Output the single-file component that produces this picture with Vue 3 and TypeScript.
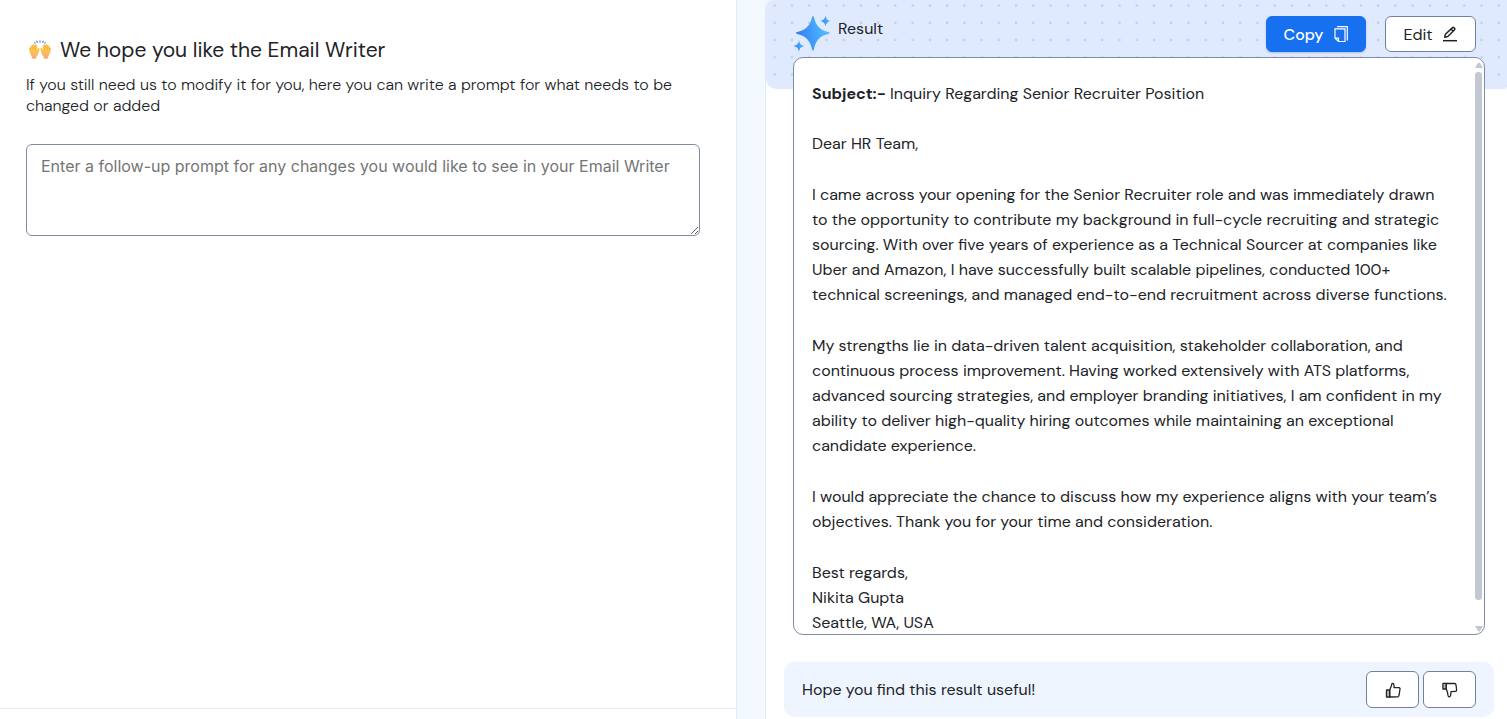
<script setup lang="ts">
import { ref } from 'vue'

const prompt = ref('')
const subject = 'Inquiry Regarding Senior Recruiter Position'
const paragraphs: string[][] = [
  ['Dear HR Team,'],
  [
    'I came across your opening for the Senior Recruiter role and was immediately drawn',
    'to the opportunity to contribute my background in full-cycle recruiting and strategic',
    'sourcing. With over five years of experience as a Technical Sourcer at companies like',
    'Uber and Amazon, I have successfully built scalable pipelines, conducted 100+',
    'technical screenings, and managed end-to-end recruitment across diverse functions.',
  ],
  [
    'My strengths lie in data-driven talent acquisition, stakeholder collaboration, and',
    'continuous process improvement. Having worked extensively with ATS platforms,',
    'advanced sourcing strategies, and employer branding initiatives, I am confident in my',
    'ability to deliver high-quality hiring outcomes while maintaining an exceptional',
    'candidate experience.',
  ],
  [
    'I would appreciate the chance to discuss how my experience aligns with your team’s',
    'objectives. Thank you for your time and consideration.',
  ],
  ['Best regards,', 'Nikita Gupta', 'Seattle, WA, USA'],
]
</script>

<template>
  <div class="page">
    <section class="prompt-panel">
      <div class="prompt-body">
        <h1>
          <svg class="hands" viewBox="0 0 24 20" aria-hidden="true">
            <defs>
              <linearGradient id="skin" x1="0" x2="0" y1="0" y2="1">
                <stop offset="0.400" stop-color="#fdc54c" />
                <stop offset="1" stop-color="#f7a685" />
              </linearGradient>
            </defs>
            <g fill="none" stroke="#4a90ea" stroke-width="1.300" stroke-linecap="round">
              <path d="M12 .9v1.200M8.800 1.200l.5 1M15.200 1.200l-.5 1M6.700 2.800l.4.300M17.300 2.800l-.4.300" />
            </g>
            <g id="hand">
              <path fill="url(#skin)" d="M4 18.300C4 16 2.300 14.500 1.700 12L1 8.500c-.1-1.100 1.100-1.300 1.400-.4L2.400 6.200c.1-1.100 1.400-1.200 1.600-.2L4.300 4.800c.3-.9 1.500-.8 1.700.1C6.500 3.900 7.800 4.200 7.700 5.300 8.400 4.700 9.400 5.200 9.200 6.200L8.900 10C9.500 8.400 10.600 7.700 11.300 8.300 11.800 8.800 11.500 9.600 11.300 10.600 10.800 13.200 9.900 15.100 8.500 16.400L8.400 18.300Q6.300 19.300 4 18.300z" />
              <path fill="none" stroke="#eb9c3a" stroke-width=".4" d="M2.500 8.200l.6 2.400M4.100 6.200l.5 3.900M6 5.100l.2 4.700M7.700 5.500l-.2 4.400" />
            </g>
            <use href="#hand" transform="matrix(-1 0 0 1 24 0)" />
          </svg>
          <span>We hope you like the Email Writer</span>
        </h1>
        <label class="intro" for="follow-up">If you still need us to modify it for you, here you can write a prompt for what needs to be<br />changed or added</label>
        <textarea id="follow-up" v-model="prompt" placeholder="Enter a follow-up prompt for any changes you would like to see in your Email Writer"></textarea>
      </div>
    </section>

    <section class="result-panel">
      <svg class="backdrop" aria-hidden="true">
        <defs>
          <pattern id="dots" width="17.240" height="17.240" patternUnits="userSpaceOnUse">
            <circle cx="8.700" cy="5.500" r="1.300" fill="#c6cbd5" />
          </pattern>
        </defs>
        <rect width="100%" height="100%" fill="url(#dots)" />
      </svg>
      <header class="result-header">
        <svg class="sparkle" viewBox="0 0 38 38" aria-hidden="true">
          <defs>
            <linearGradient id="shine" x1="0" x2="1" y1="0.200" y2="0">
              <stop offset="0" stop-color="#3480f8" />
              <stop offset="1" stop-color="#55c8ff" />
            </linearGradient>
          </defs>
          <g fill="url(#shine)">
            <path d="M19.300 1.500Q20 .5 20.700 1.500C23 11 26.500 15 36 17.300Q37.500 18 36 18.700C26.500 21 23 25 20.700 35Q20 36 19.300 35C17 25 13 21 3.500 18.700Q2 18 3.500 17.300C13 15 17 11 19.300 1.500z" />
            <path d="M32.500 .5C33.300 4.200 34.100 5 37.800 6 34.100 7 33.300 7.800 32.500 11.500 31.700 7.800 30.900 7 27.200 6 30.900 5 31.700 4.200 32.500 .5z" />
            <path d="M6 25C6.800 29.300 7.800 30.200 12 31 7.800 31.900 6.800 32.800 6 37 5.200 32.800 4.200 31.900 0 31 4.200 30.200 5.200 29.300 6 25z" />
          </g>
        </svg>
        <h2>Result</h2>
        <button type="button" class="copy">
          Copy
          <svg class="copy-icon" viewBox="0 0 14 17" fill="none" stroke="currentColor" stroke-width="1.200" aria-hidden="true">
            <path d="M3 .7h10.300v13.800M1 2.900h10v12.600H4.500L1 12.200zM1 12.200h3.500v3.300" />
          </svg>
        </button>
        <button type="button" class="edit">
          Edit
          <svg class="edit-icon" viewBox="0 0 16 16" fill="none" stroke="currentColor" stroke-width="1.500" stroke-linejoin="round" aria-hidden="true">
            <path d="M2.700 11.200l.7-3L10.500 1.600q.7-.6 1.300 0l.8.8q.6.7 0 1.300L5.800 10.500zM9 3l2.300 2.300" />
            <path d="M1 14.700h14" />
          </svg>
        </button>
      </header>

      <div class="result-box">
        <article class="email">
          <p class="subject"><strong>Subject:-</strong> {{ subject }}</p>
          <p v-for="(lines, i) in paragraphs" :key="i">
            <span v-for="line in lines" :key="line" class="line">{{ line }}</span>
          </p>
        </article>
        <div class="scrollbar" aria-hidden="true">
          <svg viewBox="0 0 8 6"><path d="M1 6Q0 6 .5 5L3 1Q4 0 5 1L7.500 5Q8 6 7 6z" /></svg>
          <div class="track"><div class="thumb"></div></div>
          <svg viewBox="0 0 8 6"><path d="M1 0Q0 0 .5 1L3 5Q4 6 5 5L7.500 1Q8 0 7 0z" /></svg>
        </div>
      </div>

      <footer class="feedback">
        <span>Hope you find this result useful!</span>
        <button type="button" aria-label="Useful">
          <svg viewBox="0 0 16 16" fill="none" stroke="currentColor" stroke-width="1.300" stroke-linejoin="round" aria-hidden="true">
            <path fill="#bbb" d="M1.500 8H4.700v7H1.500z" />
            <path d="M4.700 8L6.500 3.500 6.900 1.700Q7.600 1 8.500 1.600 9.300 2.500 9 5.500L14 5.700Q15.300 6 15 7.300L14.600 9.500 14.300 12 13.600 14.200Q13.300 14.900 12.500 14.900L4.700 15z" />
          </svg>
        </button>
        <button type="button" aria-label="Not useful">
          <svg viewBox="0 0 16 16" fill="none" stroke="currentColor" stroke-width="1.300" stroke-linejoin="round" aria-hidden="true">
            <path fill="#bbb" d="M.9 1.400H4.300V7H.9z" />
            <path d="M4.300 1.400L12.800 1.500Q13.700 1.600 13.900 2.500L14.300 5 14.600 8Q14.600 9.200 13.500 9.300L9 9.700 8.600 13.500Q8.200 15 7 14.800 6.200 14.600 6 13.500L5.500 10.500 4.300 7z" />
          </svg>
        </button>
      </footer>
    </section>
  </div>
</template>

<style>
body {
  margin: 0;
}
</style>

<style scoped>
.page {
  display: grid;
  grid-template-columns: minmax(0, 737fr) minmax(0, 742fr);
  grid-template-rows: minmax(0, 1fr);
  gap: 28px;
  height: 100vh;
  box-sizing: border-box;
  background: #f4f8ff;
  color: #212327;
  font-family: "DM Sans", Inter, "Liberation Sans", sans-serif;
  font-size: 16px;
}
.page * {
  box-sizing: border-box;
}
.prompt-panel {
  display: flex;
  padding-bottom: 10px;
  background: #fff;
  border-right: 1px solid #dfebff;
}
.prompt-body {
  flex: 1;
  min-width: 0;
  padding: 36px 36px 0 26px;
  border-bottom: 1px solid #dfebff;
}
h1 {
  display: flex;
  align-items: center;
  gap: 8px;
  margin: 0 0 10px 2px;
  font-size: 21px;
  font-weight: 400;
  line-height: 28px;
}
.hands {
  width: 24px;
  height: 20px;
}
.intro {
  display: block;
  margin-bottom: 28px;
  font-weight: 300;
  line-height: 21px;
  white-space: nowrap;
}
textarea {
  display: block;
  width: 100%;
  height: 92px;
  padding: 10px 14px;
  border: 1px solid #7f8ba8;
  border-radius: 6px;
  background: #fff;
  color: inherit;
  font: 400 16px/22px Inter, sans-serif;
  resize: both;
}
textarea::placeholder {
  color: #757575;
}
.result-panel {
  position: relative;
  display: flex;
  flex-direction: column;
  padding: 0 13px 2px 18px;
  background: #fff;
  border-left: 1px solid #dfebff;
  border-top-left-radius: 8px;
}
.backdrop {
  position: absolute;
  inset: 0 0 auto;
  width: 100%;
  height: 89px;
  background: #e0eaff;
  border-radius: 8px 0 3px 10px;
}
.result-header {
  position: relative;
  display: flex;
  align-items: flex-start;
  height: 57px;
  padding: 15px 18px 0 9px;
}
.sparkle {
  width: 38px;
  height: 38px;
}
h2 {
  flex: 1;
  margin: 4px 0 0 7px;
  font-size: 16px;
  font-weight: 400;
  line-height: 20px;
}
button {
  display: flex;
  align-items: center;
  justify-content: center;
  height: 36px;
  padding: 0;
  border: 1px solid #71809c;
  border-radius: 6px;
  background: #fff;
  color: #212327;
  font: inherit;
}
.copy {
  width: 100px;
  margin: 1px 19px 0 0;
  gap: 11px;
  border-color: #1770f0;
  background: #1770f0;
  color: #fff;
  font-weight: 500;
  box-shadow: 0 1px 2px rgb(30 60 120 / 25%);
}
.edit {
  width: 91px;
  margin-top: 1px;
  gap: 9px;
}
.copy-icon {
  width: 14px;
  height: 17px;
}
.edit-icon {
  width: 16px;
  height: 16px;
}
.result-box {
  position: relative;
  display: flex;
  flex: 1;
  min-height: 0;
  margin: 0 9px 27px;
  border: 1px solid #7f8ba8;
  border-radius: 10px;
  background: #fff;
  overflow: hidden;
}
.email {
  flex: 1;
  min-width: 0;
  padding: 23px 0 0 18px;
  line-height: 25px;
  overflow: hidden;
}
.email p {
  margin: 0 0 26px;
  white-space: nowrap;
}
.email .subject {
  margin-bottom: 25px;
}
.line {
  display: block;
}
.scrollbar {
  display: flex;
  flex-direction: column;
  align-items: center;
  gap: 4px;
  width: 7px;
  margin: 4px 2px 2px 0;
}
.scrollbar svg {
  width: 8px;
  height: 6px;
  fill: #c1c8d2;
}
.track {
  flex: 1;
  width: 7px;
}
.thumb {
  height: 96%;
  border-radius: 4px;
  background: #c1c8d2;
}
.feedback {
  display: flex;
  align-items: center;
  gap: 4px;
  height: 55px;
  padding: 0 18px;
  border-radius: 10px;
  background: #eef5ff;
}
.feedback span {
  flex: 1;
}
.feedback button {
  width: 53px;
  height: 37px;
  border-radius: 6px;
}
.feedback svg {
  width: 16px;
  height: 16px;
}
</style>
